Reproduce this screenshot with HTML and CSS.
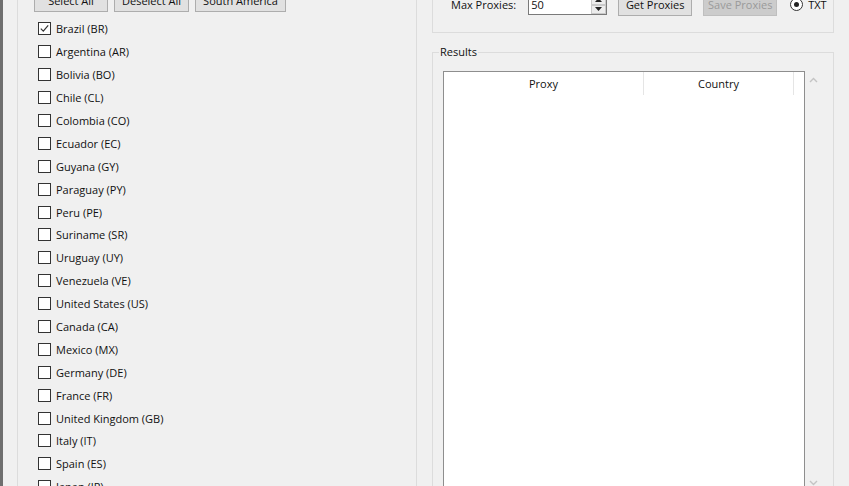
FILE: index.html
```html
<!DOCTYPE html>
<html lang="en">
<head>
  <meta charset="UTF-8">
  <meta name="viewport" content="width=device-width, initial-scale=1.0">
  <title>Proxy Scraper</title>
  <link rel="stylesheet" href="styles.css">
</head>
<body>
  <div class="window">
    <div class="group countries">
      <div class="btn-row">
        <button class="btn">Select All</button>
        <button class="btn">Deselect All</button>
        <button class="btn">South America</button>
      </div>
      <ul class="country-list">
        <li><span class="box"><svg width="11" height="11" viewBox="0 0 11 11"><path d="M1.8 5.6 L4.3 8.1 L9.2 2.4" fill="none" stroke="#333" stroke-width="1.2"/></svg></span>Brazil (BR)</li>
        <li><span class="box"></span>Argentina (AR)</li>
        <li><span class="box"></span>Bolivia (BO)</li>
        <li><span class="box"></span>Chile (CL)</li>
        <li><span class="box"></span>Colombia (CO)</li>
        <li><span class="box"></span>Ecuador (EC)</li>
        <li><span class="box"></span>Guyana (GY)</li>
        <li><span class="box"></span>Paraguay (PY)</li>
        <li><span class="box"></span>Peru (PE)</li>
        <li><span class="box"></span>Suriname (SR)</li>
        <li><span class="box"></span>Uruguay (UY)</li>
        <li><span class="box"></span>Venezuela (VE)</li>
        <li><span class="box"></span>United States (US)</li>
        <li><span class="box"></span>Canada (CA)</li>
        <li><span class="box"></span>Mexico (MX)</li>
        <li><span class="box"></span>Germany (DE)</li>
        <li><span class="box"></span>France (FR)</li>
        <li><span class="box"></span>United Kingdom (GB)</li>
        <li><span class="box"></span>Italy (IT)</li>
        <li><span class="box"></span>Spain (ES)</li>
        <li><span class="box"></span>Japan (JP)</li>
        <li><span class="box"></span>China (CN)</li>
      </ul>
    </div>

    <div class="side">
      <div class="group options">
        <div class="opt-row">
          <span class="opt-label">Max Proxies:</span>
          <div class="spin">
            <span class="spin-value">50</span>
            <div class="spin-btns">
              <span class="spin-up"><svg width="7" height="4" viewBox="0 0 7 4"><path d="M0 4 L3.5 0 L7 4Z" fill="#222"/></svg></span>
              <span class="spin-down"><svg width="7" height="4" viewBox="0 0 7 4"><path d="M0 0 L3.5 4 L7 0Z" fill="#222"/></svg></span>
            </div>
          </div>
          <button class="btn">Get Proxies</button>
          <button class="btn" disabled>Save Proxies</button>
          <span class="radio"><span class="dot"></span></span>
          <span class="radio-label">TXT</span>
        </div>
      </div>

      <fieldset class="results">
        <legend>Results</legend>
        <div class="list-wrap">
          <div class="listview">
            <div class="lv-head">
              <span class="col col-proxy">Proxy</span>
              <span class="col col-country">Country</span>
              <span class="col col-fill"></span>
            </div>
          </div>
          <div class="vscroll">
            <span class="arrow"><svg width="9" height="6" viewBox="0 0 9 6"><path d="M1 5 L4.5 1.5 L8 5" fill="none" stroke="#c4c4c4" stroke-width="1.4"/></svg></span>
            <span class="arrow"><svg width="9" height="6" viewBox="0 0 9 6"><path d="M1 1 L4.5 4.5 L8 1" fill="none" stroke="#c4c4c4" stroke-width="1.4"/></svg></span>
          </div>
        </div>
      </fieldset>
    </div>
  </div>
</body>
</html>
```

FILE: styles.css
```css
body {
  margin: 0;
  height: 486px;
  overflow: hidden;
  background-color: #f0f0f0;
  font-family: "Open Sans", "Noto Sans", sans-serif;
  font-size: 11px;
  color: #111;
}
.window {
  display: flex;
  align-items: flex-start;
  margin-top: -24px;
  padding-left: 14px;
  height: 540px;
  border-left: 3px solid #6f6f6f;
}
.group {
  border: 1px solid #dcdcdc;
  box-sizing: border-box;
}

/* buttons */
.btn {
  flex-shrink: 0;
  height: 23px;
  min-width: 74px;
  padding: 0 3px;
  border: 1px solid #adadad;
  background-color: #e1e1e1;
  font: inherit;
  color: #111;
  white-space: nowrap;
}
.btn:disabled {
  background-color: #cccccc;
  border-color: #bfbfbf;
  color: #9a9a9a;
}

/* country list */
.countries {
  width: 400px;
  height: 540px;
  padding: 12px 0 0 16px;
}
.btn-row {
  display: flex;
  gap: 6px;
}
.btn-row .btn {
  padding: 0 7px;
}
.country-list {
  list-style: none;
  margin: 5.5px 0 0 4px;
  padding: 0;
}
.country-list li {
  display: flex;
  align-items: center;
  gap: 5px;
  height: 22.9px;
}
.box {
  width: 13px;
  height: 13px;
  box-sizing: border-box;
  border: 1px solid #333;
  background-color: #fff;
  display: flex;
}

/* right column */
.side {
  width: 402px;
  margin-left: 15px;
}
.options {
  height: 57px;
  padding: 16px 0 0 18px;
}
.opt-row {
  display: flex;
  align-items: center;
  height: 23px;
  white-space: nowrap;
}
.opt-label {
  flex-shrink: 0;
  margin-right: 12px;
}
.spin {
  position: relative;
  flex-shrink: 0;
  width: 79px;
  height: 20px;
  box-sizing: border-box;
  border: 1px solid #7a7a7a;
  background-color: #fff;
  margin-right: 11px;
}
.spin-value {
  display: block;
  padding-left: 2px;
  line-height: 18px;
}
.spin-btns {
  position: absolute;
  top: 0;
  right: 0;
  width: 15px;
  height: 18px;
  display: flex;
  flex-direction: column;
}
.spin-btns span {
  flex: 1;
  display: flex;
  align-items: center;
  justify-content: center;
  background-color: #ececec;
  border: 1px solid #c9c9c9;
}
.opt-row .btn + .btn {
  margin-left: 11px;
}
.radio {
  flex-shrink: 0;
  width: 13px;
  height: 13px;
  box-sizing: border-box;
  border: 1px solid #333;
  border-radius: 50%;
  background-color: #fff;
  margin-left: 13px;
  display: flex;
  align-items: center;
  justify-content: center;
}
.radio .dot {
  width: 5px;
  height: 5px;
  border-radius: 50%;
  background-color: #222;
}
.radio-label {
  margin-left: 5px;
}

/* results */
.results {
  margin: 11px 0 0;
  padding: 0 11px 0 10px;
  border: 1px solid #dcdcdc;
  width: 402px;
  box-sizing: border-box;
}
.results legend {
  padding: 0 1px;
  margin-left: -4px;
  line-height: 16px;
}
.list-wrap {
  display: flex;
  margin-top: 11px;
}
.listview {
  width: 362px;
  height: 420px;
  box-sizing: border-box;
  border: 1px solid #8e8e8e;
  background-color: #fff;
}
.lv-head {
  display: flex;
  height: 23px;
}
.col {
  display: flex;
  align-items: center;
  justify-content: center;
  box-sizing: border-box;
  border-right: 1px solid #e5e5e5;
}
.col-proxy {
  width: 200px;
}
.col-country {
  width: 150px;
}
.col-fill {
  flex: 1;
  border-right: none;
}
.vscroll {
  width: 17px;
  height: 420px;
  display: flex;
  flex-direction: column;
  justify-content: space-between;
}
.arrow {
  height: 17px;
  display: flex;
  align-items: center;
  justify-content: center;
}
```
